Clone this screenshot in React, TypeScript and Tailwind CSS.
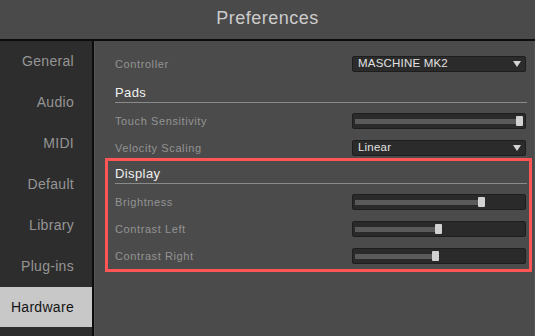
import React from "react";

const font = { fontFamily: '"Liberation Sans", Arial, Helvetica, sans-serif' };

const navItems = ["General", "Audio", "MIDI", "Default", "Library", "Plug-ins", "Hardware"];

function Arrow() {
  return (
    <svg width="8" height="6" viewBox="0 0 8 6" className="block">
      <path d="M0 0 H8 L4 6 Z" fill="#d4d4d4" />
    </svg>
  );
}

function Dropdown({ value }: { value: string }) {
  return (
    <div className="w-[174px] h-[16px] mr-px bg-[#2b2b2b] border border-[#1e1e1e] rounded-[2px] flex items-center justify-between pl-[5px] pr-[4px]">
      <span className="text-[11.5px] leading-none text-[#e2e2e2] tracking-[0.2px]">{value}</span>
      <Arrow />
    </div>
  );
}

function Slider({ track }: { track: string }) {
  return (
    <div className="w-[174px] h-[16px] mr-px bg-[#2a2a2a] border border-[#1e1e1e] rounded-[2px] flex items-center pl-[2px]">
      <div className={`${track} h-[5px] bg-[#5a5a5a]`} />
      <div className="w-[7px] h-[10px] bg-[#d2d2d2] rounded-[1px]" />
    </div>
  );
}

function Label({ children }: { children: React.ReactNode }) {
  return <span className="text-[11px] leading-none text-[#939393] tracking-[0.6px]">{children}</span>;
}

function Heading({ children }: { children: React.ReactNode }) {
  return (
    <div className="h-[23px] border-b border-[#8a8a8a] flex items-end pb-[1px]">
      <span className="text-[13px] leading-[16px] text-[#f0f0f0] tracking-[0.4px]">{children}</span>
    </div>
  );
}

export default function App() {
  return (
    <div className="w-[535px] h-[336px] overflow-hidden bg-[#0c0c0c] flex flex-col" style={font}>
      <div className="h-[39px] bg-[#4a4a4a] flex items-center justify-center pb-[4px] shrink-0">
        <span className="text-[18px] leading-none text-[#cccccc] tracking-[0.5px]">Preferences</span>
      </div>
      <div className="h-[2px] bg-[#0c0c0c] shrink-0" />
      <div className="flex flex-1 min-h-0">
        <div className="w-[92px] bg-[#2d2d2d] flex flex-col">
          {navItems.map((n) => {
            const sel = n === "Hardware";
            return (
              <div
                key={n}
                className={
                  sel
                    ? "h-[40px] mb-px bg-[#c8c8c8] flex items-center justify-end pr-[18px] text-[14px] text-[#141414] tracking-[0.3px]"
                    : "h-[40px] mb-px flex items-center justify-end pr-[18px] text-[14px] text-[#959595] tracking-[0.3px]"
                }
              >
                {n}
              </div>
            );
          })}
        </div>
        <div className="w-[2px] bg-[#0c0c0c]" />
        <div className="flex-1 bg-[#4b4b4b] border-x border-[#555555] pl-[10px] pr-[2px] pt-[15px] flex flex-col">
          <div className="pl-[10px] pr-[5px] flex flex-col">
            <div className="h-[16px] flex items-center justify-between">
              <Label>Controller</Label>
              <Dropdown value="MASCHINE MK2" />
            </div>
            <div className="mt-[8px]">
              <Heading>Pads</Heading>
            </div>
            <div className="mt-[10px] h-[16px] flex items-center justify-between">
              <Label>Touch Sensitivity</Label>
              <Slider track="w-[161px]" />
            </div>
            <div className="mt-[11px] h-[16px] flex items-center justify-between">
              <Label>Velocity Scaling</Label>
              <Dropdown value="Linear" />
            </div>
          </div>
          <div className="mt-[2px] border-[3px] border-[#ff5555] pl-[7px] pr-[2px] pb-[5px] flex flex-col">
            <Heading>Display</Heading>
            <div className="mt-[10px] h-[16px] flex items-center justify-between">
              <Label>Brightness</Label>
              <Slider track="w-[123px]" />
            </div>
            <div className="mt-[11px] h-[16px] flex items-center justify-between">
              <Label>Contrast Left</Label>
              <Slider track="w-[80px]" />
            </div>
            <div className="mt-[11px] h-[16px] flex items-center justify-between">
              <Label>Contrast Right</Label>
              <Slider track="w-[77px]" />
            </div>
          </div>
        </div>
      </div>
    </div>
  );
}
